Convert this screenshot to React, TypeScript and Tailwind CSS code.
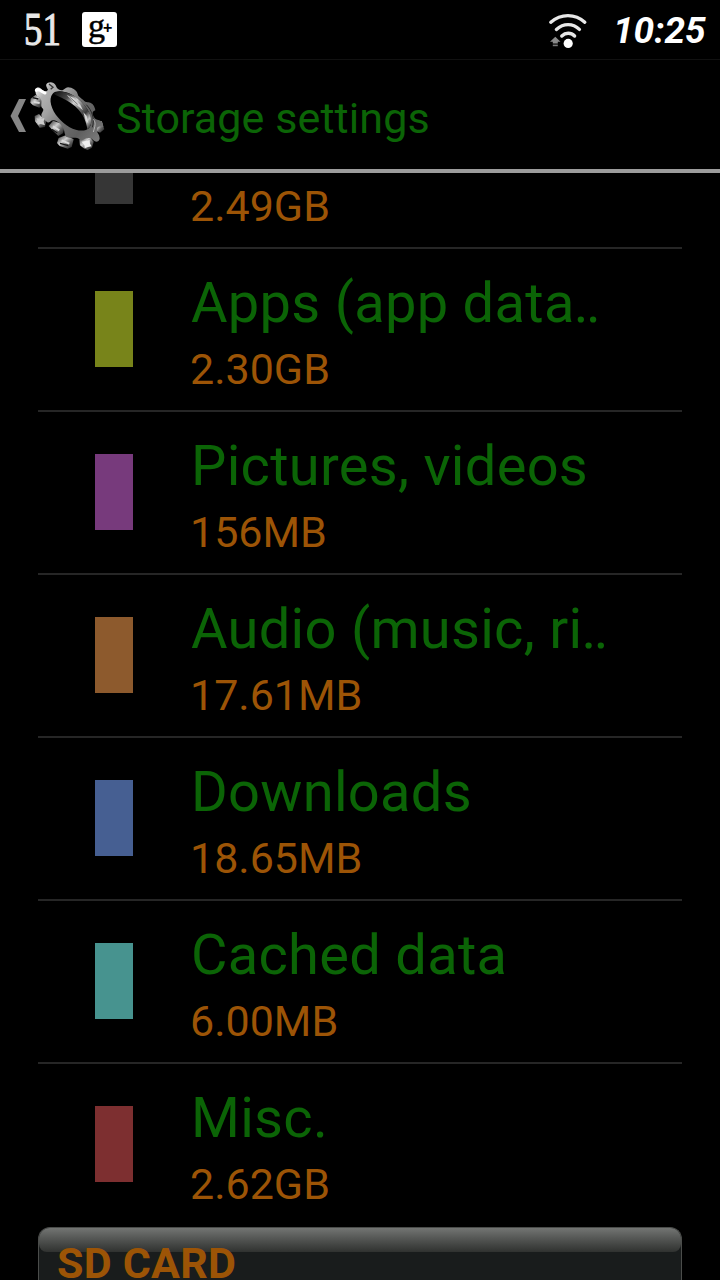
interface StorageEntry {
  title: string
  truncated?: boolean
  size: string
  swatch: string
}

const ENTRIES: StorageEntry[] = [
  { title: 'Apps (app data', truncated: true, size: '2.30GB', swatch: 'bg-[#78841a]' },
  { title: 'Pictures, videos', size: '156MB', swatch: 'bg-[#773a7c]' },
  { title: 'Audio (music, ri', truncated: true, size: '17.61MB', swatch: 'bg-[#8d5a2d]' },
  { title: 'Downloads', size: '18.65MB', swatch: 'bg-[#465f92]' },
  { title: 'Cached data', size: '6.00MB', swatch: 'bg-[#47938f]' },
  { title: 'Misc.', size: '2.62GB', swatch: 'bg-[#7d2f30]' },
]

const WifiIcon: React.FC = () => (
  <svg width="42" height="38" viewBox="0 0 42 38" fill="none">
    <g stroke="#e8e8e8" strokeWidth="3.4" strokeLinecap="round">
      <path d="M3.8 10.2C14 1.4 28 1.4 37.8 10.2" />
      <path d="M9.4 17.4C16.5 11 25.8 11 32.4 17.4" />
      <path d="M14.8 24C18.5 20.4 24 20.4 27.6 24" />
    </g>
    <circle cx="21.2" cy="31.4" r="4.6" fill="#fff" />
    <path d="M3 29.8L8.3 24.8L13.5 29.8H10.8V31.6H5.8V29.8Z" fill="#8a8a8a" />
    <path d="M5.8 33.4H10.8" stroke="#777" strokeWidth="1.6" />
  </svg>
)

const GearIcon: React.FC = () => (
  <svg width="76" height="76" viewBox="86 54 228 228" fill="none">
    <defs>
      <linearGradient id="face" x1="105" y1="80" x2="300" y2="240" gradientUnits="userSpaceOnUse">
        <stop offset="0" stopColor="#f8f8f8" />
        <stop offset=".14" stopColor="#b0b0b0" />
        <stop offset=".3" stopColor="#a2a2a2" />
        <stop offset=".55" stopColor="#6c6c6c" />
        <stop offset=".75" stopColor="#5f5f5f" />
        <stop offset="1" stopColor="#7d7d7d" />
      </linearGradient>
      <linearGradient id="tooth" x1="0" y1="0" x2="1" y2="1">
        <stop offset="0" stopColor="#2a2a2a" />
        <stop offset=".4" stopColor="#cdcdcd" />
        <stop offset=".65" stopColor="#666" />
        <stop offset="1" stopColor="#111" />
      </linearGradient>
      <linearGradient id="inner" x1="165" y1="95" x2="275" y2="200" gradientUnits="userSpaceOnUse">
        <stop offset="0" stopColor="#111" />
        <stop offset=".25" stopColor="#4a4a4a" />
        <stop offset=".42" stopColor="#cfcfcf" />
        <stop offset=".56" stopColor="#777" />
        <stop offset=".72" stopColor="#3a3a3a" />
        <stop offset=".85" stopColor="#c4c4c4" />
        <stop offset="1" stopColor="#222" />
      </linearGradient>
    </defs>
    {/* tooth sides */}
    <g fill="url(#tooth)">
      <path d="M91 116L106 104L124 116L128 134L117 143L98 136L90 128Z" />
      <path d="M103 168L116 162L124 170L133 173L138 184L134 201L118 203L111 193L104 184Z" />
      <path d="M145 198L158 182L180 190L192 204L188 220L174 228L160 214Z" />
      <path d="M175 234L196 226L220 238L214 261L202 266L178 258L170 249Z" />
      <path d="M237 240L250 229L270 233L280 245L275 263L262 270L250 265L239 256Z" />
      <path d="M282 182L304 184L312 208L299 218L286 212Z" />
    </g>
    <path
      fillRule="evenodd"
      fill="url(#face)"
      d="M104 88C110 80 118 82 124 88C129 93 137 97 143 89C139 80 133 73 143 68C152 64 162 68 166 76C169 84 174 91 183 91C191 92 195 82 203 82C216 82 229 91 232 102C233 110 241 113 249 120C256 129 262 125 270 128C280 132 284 142 285 151C276 154 274 160 281 172C288 184 301 177 307 189L309 201C301 199 292 198 290 206C287 218 299 222 298 236C296 246 286 248 279 241C272 232 264 233 258 235C251 237 247 244 239 240C232 229 211 236 201 232C191 227 194 211 188 203C181 192 171 182 160 181C150 180 151 190 141 187C132 181 124 172 123 166C123 157 135 150 125 143C120 139 126 124 122 119C118 110 106 108 106 98ZM157 101C143 117 153 149 174 173C197 201 232 217 257 210C277 202 275 178 267 159C256 134 233 114 211 102C190 92 167 90 157 101Z"
    />
    <path
      fill="url(#inner)"
      d="M160 101C169 91 191 93 212 103C234 114 256 135 267 159C276 180 275 201 261 208C259 184 247 160 226 140C204 120 180 113 160 101Z"
    />
    <path d="M199 105L221 114L240 134L248 151L235 140L215 121Z" fill="#d2d2d2" />
    <path d="M207 110L232 133" stroke="#777" strokeWidth="3" />
    <path d="M249 157L259 168L264 190L256 181Z" fill="#d8d8d8" />
    <path d="M258 134C275 152 284 176 276 202" stroke="#2a2a2a" strokeWidth="3" />
    <path d="M279 178C288 188 284 198 279 216" stroke="#b5b5b5" strokeWidth="3" />
    <path d="M108 91C115 85 124 95 134 99" stroke="#fff" strokeWidth="9" strokeLinecap="round" />
    <path d="M146 72L158 82L151 88" stroke="#333" strokeWidth="4" />
    <path d="M101 126L118 129M158 199L177 211M184 241L207 251" stroke="#d9d9d9" strokeWidth="6" />
    <path d="M97 113L114 117M155 208L171 219M179 250L204 257" stroke="#171717" strokeWidth="4" />
    <path d="M108 175L120 177L132 174L130 185L134 196L121 192L112 194L114 185Z" fill="#ccc" />
    <path d="M244 245L256 243L268 240L269 251L274 259L263 261L253 265L252 256Z" fill="#eee" />
  </svg>
)

const StatusBar: React.FC = () => (
  <div className="flex h-[60px] items-start border-b border-[#111] text-white">
    <div className="ml-[24px] mt-[7px] h-[46px] w-[37px]">
      <span className="block origin-left scale-x-[.8] font-['Liberation_Serif',serif] text-[46px] leading-[46px] text-[#e8e8e8] [-webkit-text-stroke:1px_#e8e8e8]">
        51
      </span>
    </div>
    <div className="ml-[21px] mt-[12px] flex h-[35px] w-[35px] rounded-[3px] bg-white text-black">
      <span className="-mt-[5px] ml-[6px] font-['Liberation_Serif',serif] text-[34px] leading-[38px] [-webkit-text-stroke:0.5px_#000]">
        g
      </span>
      <span className="-ml-[2px] mt-[6px] font-['Liberation_Sans',sans-serif] text-[16px] font-bold leading-[20px]">
        +
      </span>
    </div>
    <div className="ml-auto mt-[12px]">
      <WifiIcon />
    </div>
    <span className="ml-[24px] mr-[13px] mt-[9px] w-[94px] whitespace-nowrap text-[37px] font-bold italic leading-[44px]">
      10:25
    </span>
  </div>
)

const TitleBar: React.FC = () => (
  <header className="flex h-[113px] items-start border-b-4 border-[#9c9c9c]">
    <svg className="ml-[10px] mt-[38px]" width="17" height="36" viewBox="0 0 17 36">
      <path d="M9 1H16L8 18L16 34H9L0.5 18Z" fill="#868686" />
    </svg>
    <div className="ml-[2px] mt-[18px]">
      <GearIcon />
    </div>
    <h1 className="ml-[11px] mt-[33px] whitespace-nowrap text-[43px] leading-[50px] tracking-[0.1px] text-[#0b6406]">
      Storage settings
    </h1>
  </header>
)

const StorageRow: React.FC<{ entry: StorageEntry; last: boolean }> = ({ entry, last }) => (
  <li className={`flex h-[163px] border-b-2 pl-[57px] ${last ? 'border-transparent' : 'border-[#262626]'}`}>
    <div className={`mt-[42px] h-[76px] w-[38px] ${entry.swatch}`} />
    <div className="ml-[57px] mt-[21px] whitespace-nowrap leading-[66px]">
      <p className="pl-px text-[56px] tracking-[0.3px] text-[#0b6406]">
        {entry.title}
        {entry.truncated ? <span className="-ml-px tracking-[-2.4px]">..</span> : null}
      </p>
      <p className="text-[43px] text-[#9c5406]">{entry.size}</p>
    </div>
  </li>
)

const App: React.FC = () => {
  return (
    <div className="flex h-[1280px] w-[720px] flex-col overflow-hidden bg-black font-[Roboto,sans-serif]">
      <StatusBar />
      <TitleBar />
      <main className="px-[38px]">
        <div className="flex h-[76px] border-b-2 border-[#262626] pl-[57px]">
          <div className="h-[31px] w-[38px] bg-[#363636]" />
          <p className="ml-[57px] whitespace-nowrap text-[43px] leading-[66px] text-[#9c5406]">2.49GB</p>
        </div>
        <ul>
          {ENTRIES.map((entry, index) => (
            <StorageRow key={entry.title} entry={entry} last={index === ENTRIES.length - 1} />
          ))}
        </ul>
      </main>
      <section className="mx-[38px] h-[53px] shrink-0 rounded-t-[12px] border border-b-0 border-[#4a4c4a] bg-[#191c1c]">
        <div className="h-[24px] rounded-t-[11px] rounded-b-[8px] bg-linear-to-b from-[#737573] to-[#303230]" />
        <h2 className="-mt-[9px] ml-[18px] h-[37px] text-[43px] font-bold leading-[41px] tracking-[0.2px] text-[#9c5406]">
          SD CARD
        </h2>
      </section>
    </div>
  )
}

export default App
